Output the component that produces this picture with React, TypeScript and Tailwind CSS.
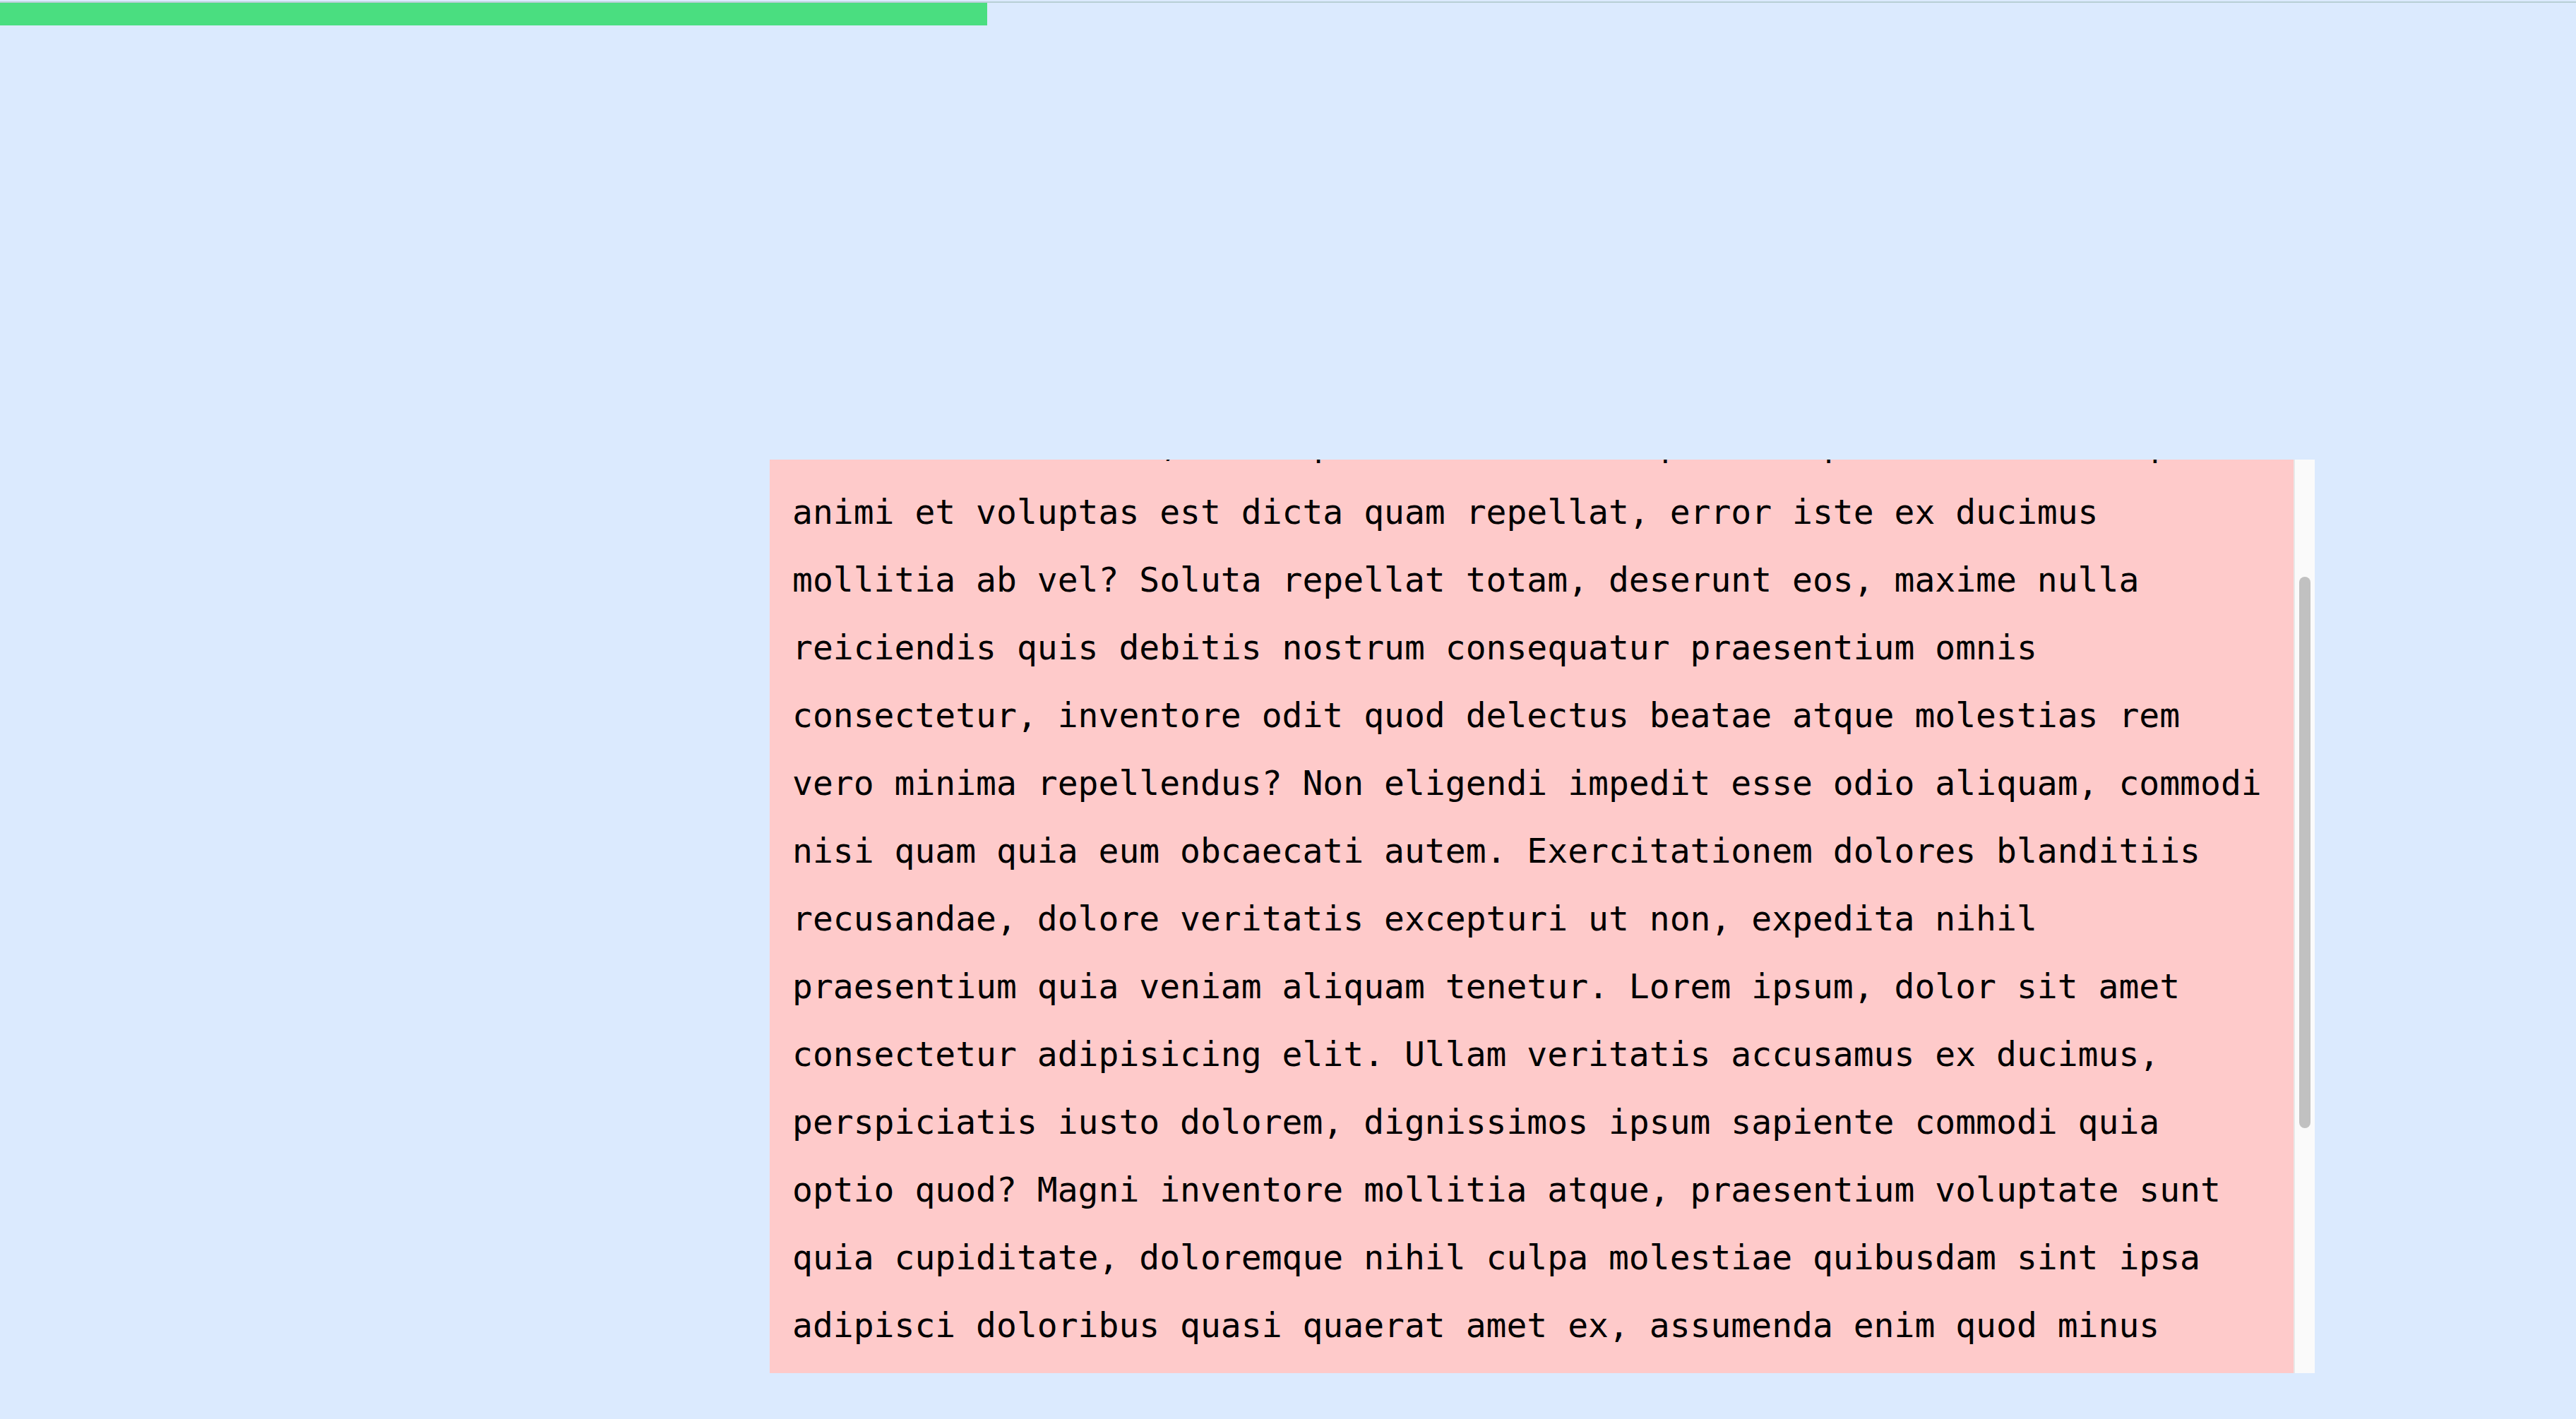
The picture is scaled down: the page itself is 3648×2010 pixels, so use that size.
import { useEffect, useRef } from "react";

const text =
  "Lorem ipsum, dolor sit amet consectetur adipisicing elit. Ullam veritatis accusamus ex ducimus, perspiciatis iusto dolorem, dignissimos nihil sit eos illo, iste quae nesciunt at quo eum quis dolorem et quod animi et voluptas est dicta quam repellat, error iste ex ducimus mollitia ab vel? Soluta repellat totam, deserunt eos, maxime nulla reiciendis quis debitis nostrum consequatur praesentium omnis consectetur, inventore odit quod delectus beatae atque molestias rem vero minima repellendus? Non eligendi impedit esse odio aliquam, commodi nisi quam quia eum obcaecati autem. Exercitationem dolores blanditiis recusandae, dolore veritatis excepturi ut non, expedita nihil praesentium quia veniam aliquam tenetur. Lorem ipsum, dolor sit amet consectetur adipisicing elit. Ullam veritatis accusamus ex ducimus, perspiciatis iusto dolorem, dignissimos ipsum sapiente commodi quia optio quod? Magni inventore mollitia atque, praesentium voluptate sunt quia cupiditate, doloremque nihil culpa molestiae quibusdam sint ipsa adipisci doloribus quasi quaerat amet ex, assumenda enim quod minus animi et voluptas est dicta quam repellat, error iste ex ducimus mollitia ab vel? Soluta repellat totam, deserunt eos, maxime nulla reiciendis quis debitis nostrum consequatur praesentium omnis consectetur, inventore odit quod delectus beatae atque molestias rem vero minima repellendus? Non eligendi impedit esse odio aliquam, commodi nisi quam quia eum obcaecati autem.";

function ScrollBox() {
  const paneRef = useRef<HTMLDivElement>(null);

  // scrolled down a bit, like in the screenshot
  useEffect(() => {
    if (paneRef.current) {
      paneRef.current.scrollTop = 278;
    }
  }, []);

  return (
    <div className="ml-[1090px] flex h-[1294px] w-[2188px]">
      <div
        ref={paneRef}
        className="h-full w-[2158px] overflow-hidden bg-[#fecaca] px-[32px] py-[16px]"
      >
        <p className="font-['DejaVu_Sans_Mono',monospace] text-[48px] leading-[96px] text-black">
          {text}
        </p>
      </div>
      {/* scrollbar */}
      <div className="h-full w-[30px] border-l-[2px] border-[#e8e8e8] bg-[#fafafa] pl-[6px] pt-[166px]">
        <div className="h-[781px] w-[16px] rounded-full bg-[#c1c1c1]" />
      </div>
    </div>
  );
}

export default function App() {
  return (
    <div className="h-screen w-full overflow-hidden bg-[#dbeafe]">
      <div className="pt-[2px]">
        <div className="h-[2px] w-full bg-[#b7cfd5]" />
        <div className="h-[32px] w-[1398px] bg-[#4ade80]" />
      </div>
      <div className="pt-[615px]">
        <ScrollBox />
      </div>
    </div>
  );
}
